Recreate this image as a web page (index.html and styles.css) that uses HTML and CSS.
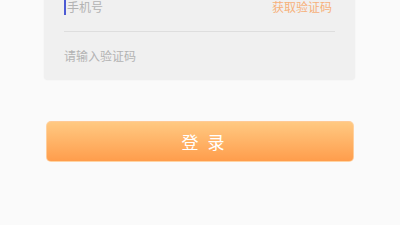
FILE: index.html
```html
<!DOCTYPE html>
<html lang="zh-CN">
<head>
  <meta charset="UTF-8">
  <meta name="viewport" content="width=device-width, initial-scale=1.0">
  <title>登录</title>
  <link rel="stylesheet" href="styles.css">
</head>
<body>

  <div class="page">
    <div class="form-card">
      <div class="field">
        <div class="field-input"><span class="caret"></span>手机号</div>
        <div class="code-btn">获取验证码</div>
      </div>
      <div class="divider"></div>
      <div class="field">
        <div class="field-input">请输入验证码</div>
      </div>
    </div>

    <button class="login-btn">登录</button>
  </div>

</body>
</html>
```

FILE: styles.css
```css
html, body {
  margin: 0;
  padding: 0;
  background-color: #fafafa;
  font-family: "Noto Sans CJK SC", "Noto Sans", sans-serif;
  overflow: hidden;
}

.page {
  height: 225px;
}

.form-card {
  margin: -17px 45px 0 44px;
  padding: 0 20px;
  background-color: #f0f0f0;
  border-radius: 4px;
  box-shadow: 0 0 2px rgba(0, 0, 0, 0.06);
}

.field {
  display: flex;
  align-items: center;
  justify-content: space-between;
  height: 48px;
}

.field-input {
  display: flex;
  align-items: center;
  font-size: 12px;
  line-height: 12px;
  color: #b3b3b3;
}

.caret {
  display: inline-block;
  width: 2px;
  height: 16px;
  margin-right: 1px;
  background-color: #4d5bd4;
}

.code-btn {
  font-size: 12px;
  line-height: 12px;
  color: #f7b17a;
  margin-right: 3px;
}

.divider {
  height: 1px;
  background-color: #dedede;
}

.login-btn {
  display: block;
  width: 308px;
  height: 41px;
  margin: 41px 0 0 46px;
  padding: 0 0 0 15px;
  border: 1px solid rgba(255, 214, 170, 0.8);
  border-radius: 5px;
  background: linear-gradient(180deg, #ffc982 0%, #ff9d4c 100%);
  color: #fff;
  font-family: inherit;
  font-size: 17px;
  letter-spacing: 9px;
  cursor: pointer;
}
```
